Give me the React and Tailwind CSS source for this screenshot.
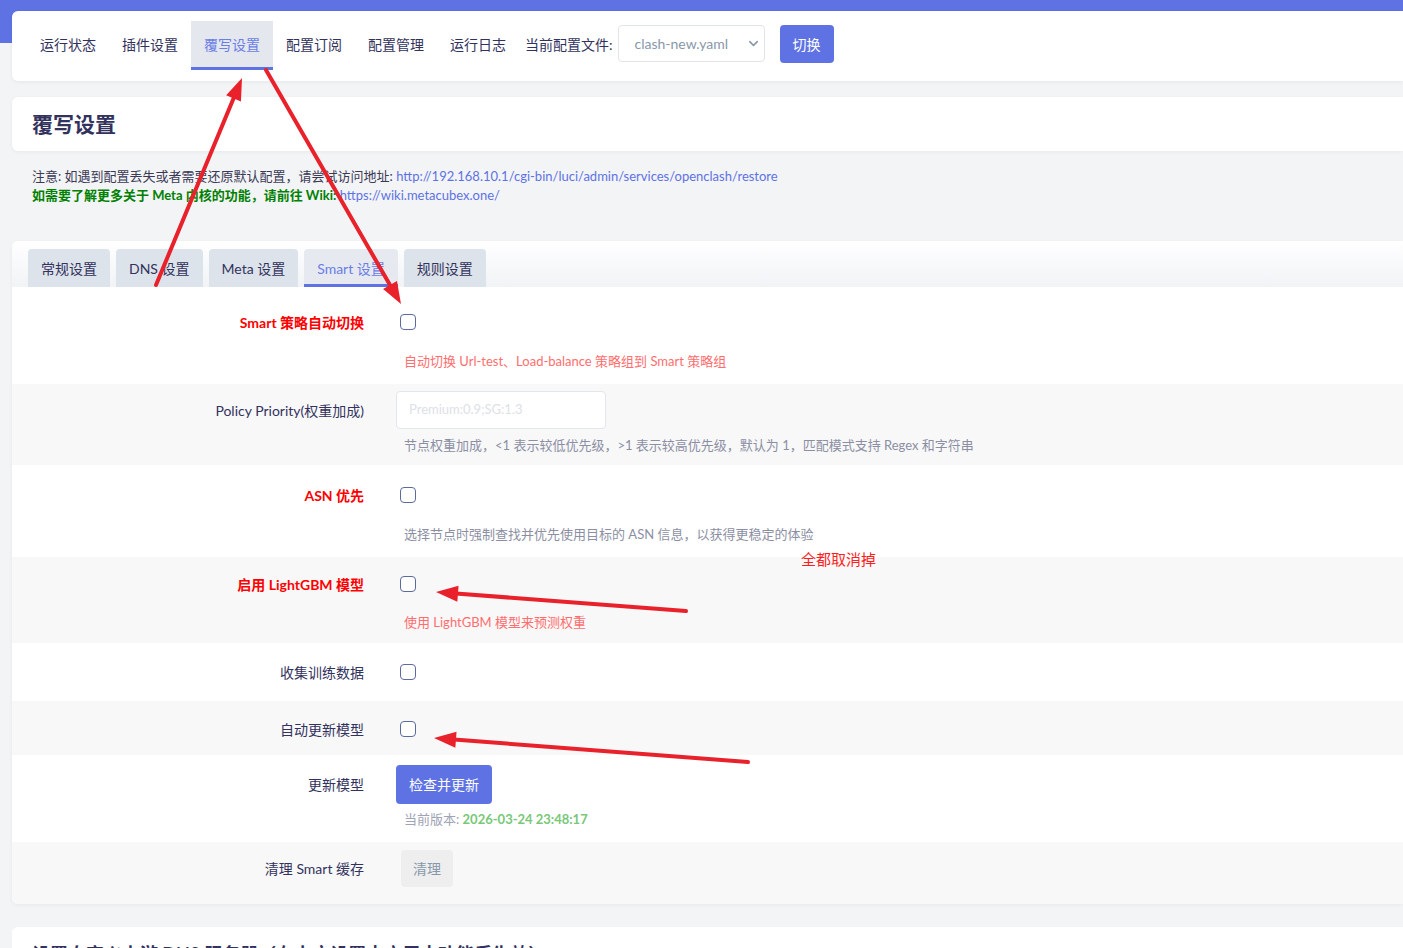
import React from "react";
import { ChevronDown } from "lucide-react";

const FONT = { fontFamily: '"Lato", "Noto Sans CJK SC", "Noto Sans", sans-serif' };

function Arrow({ x1, y1, x2, y2 }) {
  const dx = x2 - x1;
  const dy = y2 - y1;
  const len = Math.hypot(dx, dy);
  const ux = dx / len;
  const uy = dy / len;
  const hl = 22;
  const hw = 8;
  const bx = x2 - ux * hl;
  const by = y2 - uy * hl;
  const px = -uy;
  const py = ux;
  const pts = `${x2},${y2} ${bx + px * hw},${by + py * hw} ${bx - px * hw},${by - py * hw}`;
  return (
    <g>
      <line x1={x1} y1={y1} x2={bx + ux * 2} y2={by + uy * 2} stroke="#e8212b" strokeWidth="4" strokeLinecap="round" />
      <polygon points={pts} fill="#e8212b" />
    </g>
  );
}

function Checkbox() {
  return <span className="ml-1 block w-4 h-4 rounded-[4px] border-[1.5px] border-[#5d6b9c] bg-white" />;
}

function Row({ bg, pt, pb, label, red, box, boxH = 38, desc, descColor, descMt }) {
  return (
    <div className={`flex ${bg ? "bg-[#f8f8f9]" : "bg-white"}`} style={{ paddingTop: pt, paddingBottom: pb }}>
      <div
        className={`w-[352px] shrink-0 flex items-center justify-end text-[14px] ${red ? "text-[#ff0000] font-bold" : "text-[#32325d]"}`}
        style={{ height: boxH }}
      >
        {label}
      </div>
      <div className="ml-8 flex flex-col">
        <div className="flex items-center" style={{ height: boxH }}>
          {box}
        </div>
        {desc && (
          <div className="pl-2 text-[13px] leading-[20px]" style={{ marginTop: descMt, color: descColor }}>
            {desc}
          </div>
        )}
      </div>
    </div>
  );
}

export default function App() {
  const navItems = ["运行状态", "插件设置", "覆写设置", "配置订阅", "配置管理", "运行日志"];
  const tabs = ["常规设置", "DNS 设置", "Meta 设置", "Smart 设置", "规则设置"];
  return (
    <div className="relative w-[1403px] h-[948px] overflow-hidden bg-[#f3f4f6]" style={FONT}>
      <div className="absolute left-0 top-0 w-full h-[43px] bg-[#5e72e4]" />
      <div className="relative pl-3">
        {/* nav card */}
        <div className="mt-[11px] h-[70px] bg-white rounded-l-md shadow-[0_1px_4px_rgba(0,0,0,0.06)] pl-[15px] pt-[10px] flex items-start">
          {navItems.map((t, i) => (
            <div
              key={t}
              className={`h-[49px] px-[13px] flex items-center text-[14px] border-b-[3px] ${
                i === 2 ? "bg-[#e4e8ee] border-[#5e72e4] text-[#6b7de6]" : "border-transparent text-[#32325d]"
              }`}
            >
              <span className="pt-[1px]">{t}</span>
            </div>
          ))}
          <div className="ml-[6px] h-[46px] flex items-center text-[14px] text-[#32325d]">
            <span>当前配置文件:</span>
          </div>
          <div className="ml-[5px] mt-[4px] w-[147px] h-[37px] border border-[#e1e4e8] rounded-[4px] bg-white flex items-center justify-between pl-4 pr-[3px] text-[14px] text-[#8898aa]">
            <span>clash-new.yaml</span>
            <ChevronDown size={15} strokeWidth={2.5} className="text-[#8898aa]" />
          </div>
          <div className="ml-[15px] mt-[4px] w-[54px] h-[38px] rounded-[4px] bg-[#5e72e4] text-white text-[14px] flex items-center justify-center">
            切换
          </div>
        </div>

        {/* title card */}
        <div className="mt-4 h-[54px] bg-white rounded-l-md shadow-[0_1px_4px_rgba(0,0,0,0.05)] pl-5 flex items-center">
          <span className="text-[21px] font-bold text-[#32325d]">覆写设置</span>
        </div>

        {/* notes */}
        <div className="mt-[16px] pl-5 text-[13px] leading-[19px]">
          <div className="text-[#3a3a55]">
            注意: 如遇到配置丢失或者需要还原默认配置，请尝试访问地址:{" "}
            <span className="text-[#5e72e4]">http://192.168.10.1/cgi-bin/luci/admin/services/openclash/restore</span>
          </div>
          <div>
            <span className="text-[#008000] font-bold">如需要了解更多关于 Meta 内核的功能，请前往 Wiki:</span>{" "}
            <span className="text-[#5e72e4]">https://wiki.metacubex.one/</span>
          </div>
        </div>

        {/* settings card */}
        <div className="mt-[36px] bg-white rounded-l-md shadow-[0_1px_4px_rgba(0,0,0,0.05)] overflow-hidden">
          <div className="pl-4 pt-2 flex gap-[6px] bg-gradient-to-b from-white to-[#f1f3f6]">
            {tabs.map((t, i) => (
              <div
                key={t}
                className={`h-[38px] px-[13px] flex items-center rounded-t-[4px] text-[14px] ${
                  i === 3
                    ? "bg-[#e6eaf0] text-[#6b7de6] border-b-[3px] border-[#5e72e4] pt-[3px]"
                    : "bg-[#dde3ea] text-[#32325d]"
                }`}
              >
                {t}
              </div>
            ))}
          </div>

          <Row
            pt={16}
            pb={13}
            label="Smart 策略自动切换"
            red
            box={<Checkbox />}
            desc="自动切换 Url-test、Load-balance 策略组到 Smart 策略组"
            descColor="#ff6e6e"
            descMt={10}
          />
          <Row
            bg
            pt={7}
            pb={10}
            label="Policy Priority(权重加成)"
            box={
              <div className="w-[210px] h-[38px] border border-[#e3e6ea] rounded-[4px] bg-white flex items-center px-3 text-[13px] text-[#dde1e7]">
                Premium:0.9;SG:1.3
              </div>
            }
            desc="节点权重加成，<1 表示较低优先级，>1 表示较高优先级，默认为 1，匹配模式支持 Regex 和字符串"
            descColor="#8c8fa3"
            descMt={6}
          />
          <Row
            pt={11}
            pb={13}
            label="ASN 优先"
            red
            box={<Checkbox />}
            desc="选择节点时强制查找并优先使用目标的 ASN 信息，以获得更稳定的体验"
            descColor="#8c8fa3"
            descMt={10}
          />
          <Row
            bg
            pt={8}
            pb={11}
            label="启用 LightGBM 模型"
            red
            box={<Checkbox />}
            desc="使用 LightGBM 模型来预测权重"
            descColor="#ff6e6e"
            descMt={9}
          />
          <Row pt={10} pb={10} label="收集训练数据" box={<Checkbox />} />
          <Row bg pt={9} pb={7} label="自动更新模型" box={<Checkbox />} />
          <Row
            pt={10}
            pb={13}
            boxH={39}
            label="更新模型"
            box={
              <div className="h-[39px] w-[96px] rounded-[4px] bg-[#5e72e4] text-white text-[14px] flex items-center justify-center">
                检查并更新
              </div>
            }
            desc={
              <span>
                当前版本: <span className="font-bold text-[#78c878]">2026-03-24 23:48:17</span>
              </span>
            }
            descColor="#a0a3b5"
            descMt={5}
          />
          <Row
            bg
            pt={8}
            pb={17}
            boxH={37}
            label="清理 Smart 缓存"
            box={
              <div className="ml-[5px] h-[37px] w-[52px] rounded-[4px] bg-[#eeeeef] text-[#8898aa] text-[14px] flex items-center justify-center">
                清理
              </div>
            }
          />
        </div>

        {/* next card */}
        <div className="mt-[23px] h-[80px] bg-white rounded-l-md pl-5 pt-[14px]">
          <span className="text-[18px] font-bold text-[#32325d]">设置自定义上游 DNS 服务器（在上方设置中启用本功能后生效）</span>
        </div>
      </div>

      {/* annotations */}
      <div className="absolute left-[801px] top-[548px] text-[15px] text-[#ff1f1f]">全都取消掉</div>
      <svg className="absolute left-0 top-0 pointer-events-none" width="1403" height="948">
        <Arrow x1={156} y1={285} x2={242} y2={78} />
        <Arrow x1={266} y1={70} x2={401} y2={304} />
        <Arrow x1={686} y1={611} x2={436} y2={592} />
        <Arrow x1={748} y1={762} x2={434} y2={738} />
      </svg>
    </div>
  );
}
